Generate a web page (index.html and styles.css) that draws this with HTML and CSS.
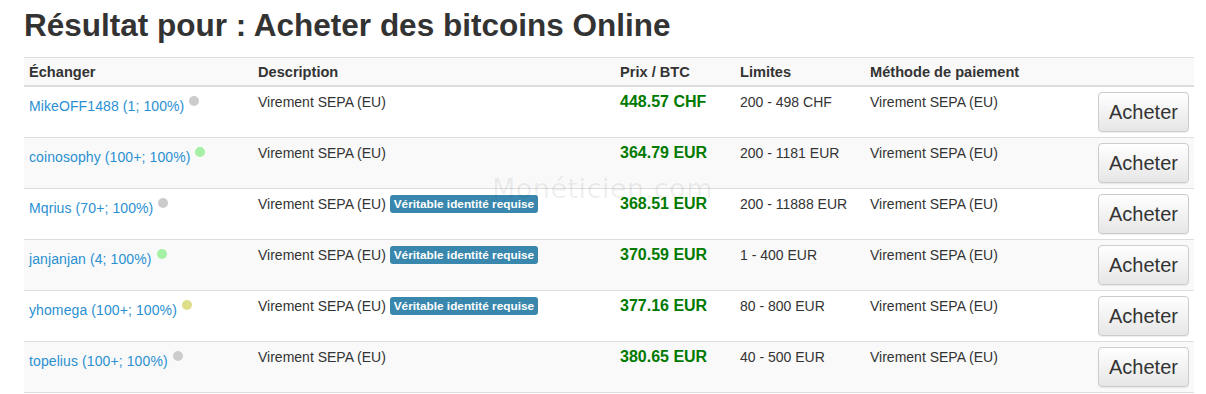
FILE: index.html
```html
<!DOCTYPE html>
<html lang="fr">
<head>
<meta charset="utf-8">
<title>Résultat pour : Acheter des bitcoins Online</title>
<link rel="stylesheet" href="styles.css">
</head>
<body>
<div class="page">
  <h2 class="title">Résultat pour : Acheter des bitcoins Online</h2>
  <table class="offers">
    <colgroup>
      <col class="c-trader"><col class="c-desc"><col class="c-price"><col class="c-limit"><col class="c-method"><col class="c-action">
    </colgroup>
    <thead>
      <tr><th>Échanger</th><th>Description</th><th>Prix / BTC</th><th>Limites</th><th>Méthode de paiement</th><th></th></tr>
    </thead>
    <tbody>
      <tr>
        <td><a href="#" class="trader">MikeOFF1488 (1; 100%)</a><span class="dot dot-grey"></span></td>
        <td>Virement SEPA (EU)</td>
        <td class="price">448.57 CHF</td>
        <td>200 - 498 CHF</td>
        <td>Virement SEPA (EU)</td>
        <td class="action"><button class="btn">Acheter</button></td>
      </tr>
      <tr>
        <td><a href="#" class="trader">coinosophy (100+; 100%)</a><span class="dot dot-green"></span></td>
        <td>Virement SEPA (EU)</td>
        <td class="price">364.79 EUR</td>
        <td>200 - 1181 EUR</td>
        <td>Virement SEPA (EU)</td>
        <td class="action"><button class="btn">Acheter</button></td>
      </tr>
      <tr>
        <td><a href="#" class="trader">Mqrius (70+; 100%)</a><span class="dot dot-grey"></span></td>
        <td>Virement SEPA (EU) <span class="badge">Véritable identité requise</span></td>
        <td class="price">368.51 EUR</td>
        <td>200 - 11888 EUR</td>
        <td>Virement SEPA (EU)</td>
        <td class="action"><button class="btn">Acheter</button></td>
      </tr>
      <tr>
        <td><a href="#" class="trader">janjanjan (4; 100%)</a><span class="dot dot-green"></span></td>
        <td>Virement SEPA (EU) <span class="badge">Véritable identité requise</span></td>
        <td class="price">370.59 EUR</td>
        <td>1 - 400 EUR</td>
        <td>Virement SEPA (EU)</td>
        <td class="action"><button class="btn">Acheter</button></td>
      </tr>
      <tr>
        <td><a href="#" class="trader">yhomega (100+; 100%)</a><span class="dot dot-yellow"></span></td>
        <td>Virement SEPA (EU) <span class="badge">Véritable identité requise</span></td>
        <td class="price">377.16 EUR</td>
        <td>80 - 800 EUR</td>
        <td>Virement SEPA (EU)</td>
        <td class="action"><button class="btn">Acheter</button></td>
      </tr>
      <tr>
        <td><a href="#" class="trader">topelius (100+; 100%)</a><span class="dot dot-grey"></span></td>
        <td>Virement SEPA (EU)</td>
        <td class="price">380.65 EUR</td>
        <td>40 - 500 EUR</td>
        <td>Virement SEPA (EU)</td>
        <td class="action"><button class="btn">Acheter</button></td>
      </tr>
    </tbody>
  </table>
  <div class="watermark">Monéticien.com</div>
</div>
</body>
</html>
```

FILE: styles.css
```css
html, body {
  margin: 0;
  padding: 0;
  background: #fff;
}
body {
  font-family: "Liberation Sans", Arial, sans-serif;
  font-size: 14px;
  line-height: 20px;
  color: #333;
}
.page {
  position: relative;
  width: 1170px;
  padding-left: 24px;
}
.title {
  margin: 0;
  padding-top: 8px;
  font-size: 31.5px;
  line-height: 34px;
  font-weight: bold;
  color: #333;
  height: 49px;
}
.offers {
  width: 1170px;
  border-collapse: collapse;
  table-layout: fixed;
  border-top: 1px solid #ddd;
}
.c-trader { width: 229px; }
.c-desc { width: 362px; }
.c-price { width: 120px; }
.c-limit { width: 130px; }
.c-method { width: 228px; }
.c-action { width: 101px; }
.offers th {
  text-align: left;
  font-weight: bold;
  font-size: 14.6px;
  padding: 4px 5px 3px;
  border-bottom: 2px solid #ddd;
  background: #f9f9f9;
  vertical-align: bottom;
}
.offers td {
  padding: 5px;
  vertical-align: top;
  border-bottom: 1px solid #ddd;
  white-space: nowrap;
}
.offers tbody tr:nth-child(even) td {
  background: #f9f9f9;
}
.trader {
  color: #2a90d2;
  text-decoration: none;
  display: inline-block;
  padding-top: 4px;
  letter-spacing: 0.1px;
}
.dot {
  display: inline-block;
  width: 10px;
  height: 10px;
  border-radius: 50%;
  margin-left: 5px;
  vertical-align: top;
  margin-top: 4px;
}
.dot-grey { background: #ccc; }
.dot-green { background: #a4f0a4; }
.dot-yellow { background: #dede8a; }
.price {
  color: #007a00;
  font-weight: bold;
  font-size: 16px;
}
.badge {
  display: inline-block;
  background: #3a87ad;
  color: #fff;
  font-size: 11.8px;
  font-weight: bold;
  line-height: 14px;
  padding: 2px 4px 2px;
  border-radius: 3px;
  vertical-align: 1px;
}
.action {
  text-align: right;
}
.btn {
  font-family: "Liberation Sans", Arial, sans-serif;
  font-size: 20px;
  color: #333;
  width: 91px;
  height: 40px;
  padding: 0;
  border: 1px solid #ccc;
  border-radius: 4px;
  background: linear-gradient(#fff, #e6e6e6);
  box-shadow: inset 0 1px 0 rgba(255,255,255,0.15), 0 1px 1px rgba(0,0,0,0.075);
}
.watermark {
  position: absolute;
  left: 492px;
  top: 179px;
  font-family: "DejaVu Sans", sans-serif;
  font-size: 27px;
  letter-spacing: 0.5px;
  color: rgba(0,0,0,0.07);
  pointer-events: none;
}
```
